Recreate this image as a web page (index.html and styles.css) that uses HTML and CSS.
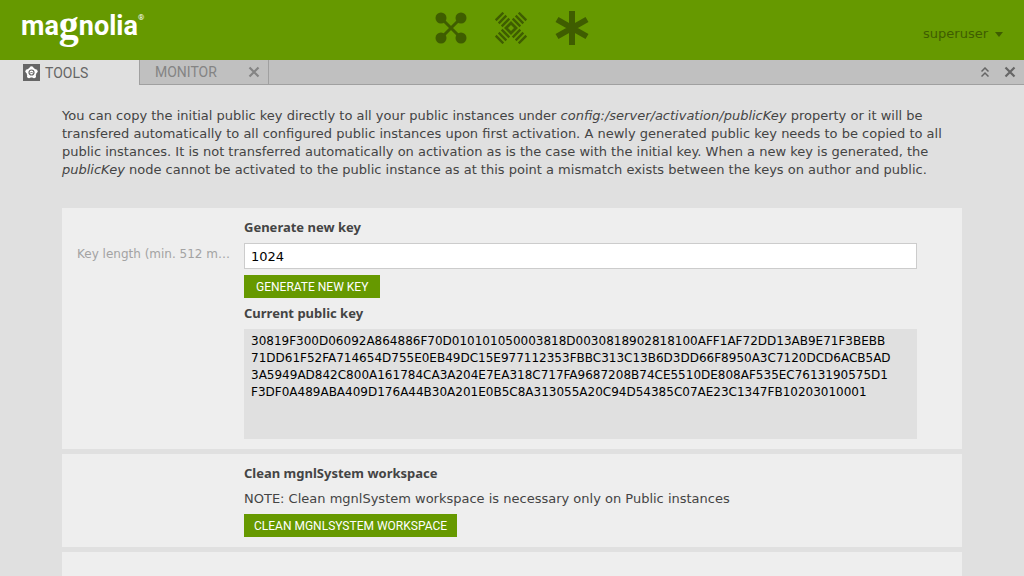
FILE: index.html
```html
<!DOCTYPE html>
<html lang="en">
<head>
<meta charset="utf-8">
<meta name="viewport" content="width=device-width, initial-scale=1">
<title>Magnolia - Tools</title>
<link rel="stylesheet" href="styles.css">
</head>
<body>
<header class="topbar">
  <a class="logo" href="#" aria-label="magnolia">
    <span>ma</span><span class="logo-g">g</span><span>nolia</span><span class="logo-reg">®</span>
  </a>
  <nav class="shells">
    <button class="shell" aria-label="Apps">
      <svg width="32" height="32" viewBox="0 0 32 32"><path d="M6 6 26 26M26 6 6 26" stroke="currentColor" stroke-width="3"/><g fill="currentColor"><circle cx="6" cy="6" r="5.5"/><circle cx="26" cy="6" r="5.5"/><circle cx="6" cy="26" r="5.5"/><circle cx="26" cy="26" r="5.5"/></g></svg>
    </button>
    <button class="shell" aria-label="Pulse">
      <svg width="32" height="32" viewBox="0 0 32 32" fill="none" stroke="currentColor"><path d="M16 11 21 16 16 21 11 16Z" stroke-width="2.800"/><path d="M.7 8.300 8.300.7M3.700 11.300 11.300 3.700M6.700 14.300 14.300 6.700M31.300 8.300 23.700.7M28.300 11.300 20.700 3.700M25.300 14.300 17.700 6.700M.7 23.700 8.300 31.300M3.700 20.700 11.300 28.300M6.700 17.700 14.300 25.300M31.300 23.700 23.700 31.300M28.300 20.700 20.700 28.300M25.300 17.700 17.700 25.300" stroke-width="2.400"/></svg>
    </button>
    <button class="shell" aria-label="Favorites">
      <svg width="34" height="36" viewBox="0 0 34 36"><path d="M17 1V35M2 9.500 32 26.500M32 9.500 2 26.500" stroke="currentColor" stroke-width="6"/></svg>
    </button>
  </nav>
  <button class="user">superuser <svg width="8" height="5" viewBox="0 0 8 5"><path d="M0 0H8L4 5Z" fill="currentColor"/></svg></button>
</header>
<div class="tabbar">
  <button class="tab tab-active">
    <svg width="17" height="17" viewBox="0 0 17 17"><path d="M0 0H17V17H0Z" fill="#666"/><g fill="#fff"><circle cx="8.500" cy="8.500" r="5"/><circle cx="8.500" cy="4.200" r="2"/><circle cx="12.600" cy="7.200" r="2"/><circle cx="11" cy="12.200" r="2"/><circle cx="6" cy="12.200" r="2"/><circle cx="4.400" cy="7.200" r="2"/></g><circle cx="8.500" cy="8.500" r="2.500" fill="none" stroke="#666" stroke-width="1.200"/><path d="M7 9.500 8.500 8 10 9.500" fill="none" stroke="#666"/></svg>
    TOOLS
  </button>
  <div class="tab tab-idle">
    <button class="tab-name">MONITOR</button>
    <button class="icon-button" aria-label="Close tab"><svg width="12" height="12" viewBox="0 0 12 12"><path d="M1.500 1.500 10.500 10.500M10.500 1.500 1.500 10.500" stroke="currentColor" stroke-width="2.200"/></svg></button>
  </div>
  <div class="window-tools">
    <button class="icon-button" aria-label="Full screen"><svg width="8" height="10" viewBox="0 0 8 10"><path d="M.5 4.500 4 1 7.500 4.500M.5 9.500 4 6 7.500 9.500" fill="none" stroke="currentColor" stroke-width="1.500"/></svg></button>
    <button class="icon-button" aria-label="Close"><svg width="12" height="12" viewBox="0 0 12 12"><path d="M1.500 1.500 10.500 10.500M10.500 1.500 1.500 10.500" stroke="currentColor" stroke-width="2.200"/></svg></button>
  </div>
</div>
<main class="content">
  <p class="intro">You can copy the initial public key directly to all your public instances under <em>config:/server/activation/publicKey</em> property or it will be<br>transfered automatically to all configured public instances upon first activation. A newly generated public key needs to be copied to all<br>public instances. It is not transferred automatically on activation as is the case with the initial key. When a new key is generated, the<br><em>publicKey</em> node cannot be activated to the public instance as at this point a mismatch exists between the keys on author and public.</p>
  <section class="card">
    <h2 class="title">Generate new key</h2>
    <label class="label" for="length">Key length (min. 512 m…</label>
    <input class="text-field" id="length" type="text" value="1024">
    <button class="action action-wide">GENERATE NEW KEY</button>
    <label class="title title-key" for="key">Current public key</label>
    <textarea class="key" id="key" readonly>30819F300D06092A864886F70D010101050003818D0030818902818100AFF1AF72DD13AB9E71F3BEBB
71DD61F52FA714654D755E0EB49DC15E977112353FBBC313C13B6D3DD66F8950A3C7120DCD6ACB5AD
3A5949AD842C800A161784CA3A204E7EA318C717FA9687208B74CE5510DE808AF535EC7613190575D1
F3DF0A489ABA409D176A44B30A201E0B5C8A313055A20C94D54385C07AE23C1347FB10203010001</textarea>
  </section>
  <section class="card">
    <h2 class="title">Clean mgnlSystem workspace</h2>
    <p class="note">NOTE: Clean mgnlSystem workspace is necessary only on Public instances</p>
    <button class="action">CLEAN MGNLSYSTEM WORKSPACE</button>
  </section>
  <section class="card card-next"></section>
</main>
</body>
</html>
```
FILE: styles.css
```css
* {
  box-sizing: border-box;
}

html {
  height: 100%;
}

body {
  margin: 0;
  height: 100%;
  display: flex;
  flex-direction: column;
  overflow: hidden;
  background: #e0e0e0;
  color: #444;
  font: 13px/18px Verdana, "DejaVu Sans", sans-serif;
}

button {
  margin: 0;
  padding: 0;
  border: 0;
  background: none;
  color: inherit;
  font: inherit;
  cursor: pointer;
}

svg {
  display: block;
}

.topbar {
  flex: none;
  display: grid;
  grid-template-columns: 1fr auto 1fr;
  align-items: center;
  height: 60px;
  padding: 0 21px;
  background: #690;
  color: #3f5d00;
}

.logo {
  display: flex;
  align-items: flex-start;
  justify-self: start;
  height: 40px;
  color: #fff;
  font: bold 27px/32px Roboto, sans-serif;
  text-decoration: none;
}

.logo-g {
  font: bold 40px/30px "Liberation Serif", serif;
}

.logo-reg {
  font: 8px/16px Roboto, sans-serif;
}

.shells {
  display: flex;
  align-items: center;
  gap: 28px;
  padding-bottom: 4px;
}

.user {
  display: flex;
  align-items: center;
  gap: 7px;
  justify-self: end;
  padding-top: 8px;
}

.tabbar {
  flex: none;
  display: flex;
  height: 25px;
  background: #c0c0c0;
  font: 14px/24px Roboto, sans-serif;
  color: #666;
}

.tab {
  display: flex;
  align-items: center;
}

.tab-active {
  gap: 5px;
  width: 139px;
  padding-left: 23px;
  background: #e0e0e0;
}

.tab-idle {
  justify-content: space-between;
  width: 130px;
  padding: 0 8px 0 15px;
  border: 1px solid #a0a0a0;
  border-top: 0;
  color: #848484;
}

.window-tools {
  flex: 1;
  display: flex;
  align-items: center;
  justify-content: flex-end;
  gap: 15px;
  padding-right: 8px;
  border-bottom: 1px solid #a0a0a0;
}

.content {
  flex: 1;
  display: flex;
  flex-direction: column;
  gap: 5px;
  min-height: 0;
  padding: 22px 62px 0;
}

.intro {
  margin: 0 0 24px;
  white-space: nowrap;
}

.card {
  flex: none;
  display: grid;
  grid-template-columns: 155px 1fr;
  column-gap: 12px;
  justify-items: start;
  align-items: center;
  padding: 10px 45px 10px 15px;
  background: #eee;
}

.card > * {
  grid-column: 2;
}

.card .label {
  grid-column: 1;
  grid-row: 2;
  padding-bottom: 4px;
  white-space: nowrap;
  color: #a3a3a3;
  font-size: 12px;
}

.title {
  margin: 0 0 7px;
  font: bold 13px/18px "Noto Sans", sans-serif;
}

.text-field {
  width: 100%;
  height: 26px;
  padding: 0 6px;
  border: 1px solid #ccc;
  background: #fff;
  color: #000;
  font: inherit;
}

.action {
  height: 23px;
  padding: 2px 10px 0;
  background: #690;
  color: #fff;
  font: 12px/21px Roboto, sans-serif;
}

.action-wide {
  margin-top: 6px;
  padding: 2px 12px 0;
}

.title-key {
  margin-top: 6px;
}

.key {
  display: block;
  width: 100%;
  height: 110px;
  padding: 4px 0 4px 7px;
  border: 0;
  resize: none;
  overflow: hidden;
  background: #e0e0e0;
  color: #000;
  font: 12px/17px Verdana, "DejaVu Sans", sans-serif;
  white-space: pre;
}

.note {
  margin: 1px 0 6px;
}

.card-next {
  flex: 1;
}
```
